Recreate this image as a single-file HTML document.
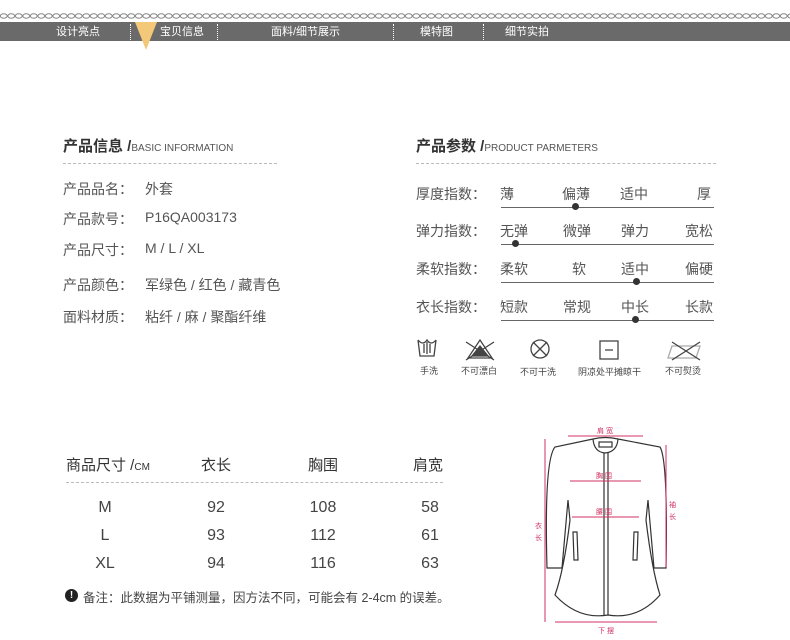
<!DOCTYPE html>
<html><head><meta charset="utf-8"><style>
body{margin:0;width:790px;height:640px;background:#fff;position:relative;overflow:hidden;font-family:"Liberation Sans","Noto Sans CJK SC",sans-serif;color:#555}
.a{position:absolute;white-space:nowrap}
.nav{font-size:11px;color:#fff;top:24px;line-height:16px}
.sep{position:absolute;top:24px;height:16px;border-left:1px dotted #fff}
.t{font-size:15px;font-weight:bold;color:#333}
.t span{font-size:10px;font-weight:normal;color:#555}
.dash{position:absolute;border-top:1px dashed #bbb;height:0}
.l{font-size:14px;color:#555}
.o{font-size:14px;color:#555}
.ln{position:absolute;height:1px;background:#666}
.dot{position:absolute;width:7px;height:7px;border-radius:50%;background:#333}
.ic{font-size:9px;color:#444}
.tb{font-size:16px;color:#444;text-align:center;width:60px}
.th{font-size:15px;color:#333;text-align:center;width:60px}
</style></head><body>
<svg class="a" style="left:0;top:12px" width="790" height="8"><defs><pattern id="c" width="7.5" height="8" patternUnits="userSpaceOnUse"><ellipse cx="3.75" cy="4" rx="3.4" ry="2.2" fill="none" stroke="#888" stroke-width="1"/></pattern></defs><rect width="790" height="8" fill="url(#c)"/></svg>
<div class="a" style="left:0;top:22px;width:790px;height:19px;background:#6a6a6a"></div>
<div class="a nav" style="left:56px">设计亮点</div>
<div class="sep" style="left:130px"></div>
<div class="a nav" style="left:160px">宝贝信息</div>
<div class="sep" style="left:217px"></div>
<div class="a nav" style="left:271px">面料/细节展示</div>
<div class="sep" style="left:393px"></div>
<div class="a nav" style="left:420px">模特图</div>
<div class="sep" style="left:483px"></div>
<div class="a nav" style="left:505px">细节实拍</div>
<svg class="a" style="left:135px;top:22px" width="23" height="29"><polygon points="0,0 22,0 11,28" fill="#f3c878"/></svg>

<div class="a t" style="left:63px;top:135px">产品信息 /<span>BASIC INFORMATION</span></div>
<div class="dash" style="left:63px;top:163px;width:214px"></div>
<div class="a l" style="left:63px;top:179px">产品品名：</div><div class="a l" style="left:145px;top:179px">外套</div>
<div class="a l" style="left:63px;top:209px">产品款号：</div><div class="a l" style="left:145px;top:209px">P16QA003173</div>
<div class="a l" style="left:63px;top:240px">产品尺寸：</div><div class="a l" style="left:145px;top:240px">M / L / XL</div>
<div class="a l" style="left:63px;top:275px">产品颜色：</div><div class="a l" style="left:145px;top:275px">军绿色 / 红色 / 藏青色</div>
<div class="a l" style="left:63px;top:307px">面料材质：</div><div class="a l" style="left:145px;top:307px">粘纤 / 麻 / 聚酯纤维</div>

<div class="a t" style="left:416px;top:135px">产品参数 /<span>PRODUCT PARMETERS</span></div>
<div class="dash" style="left:416px;top:163px;width:300px"></div>

<div class="a l" style="left:416px;top:184px">厚度指数：</div>
<div class="a o" style="left:500px;top:184px">薄</div><div class="a o" style="left:562px;top:184px">偏薄</div><div class="a o" style="left:620px;top:184px">适中</div><div class="a o" style="left:697px;top:184px">厚</div>
<div class="ln" style="left:501px;top:207px;width:213px"></div><div class="dot" style="left:572px;top:203px"></div>

<div class="a l" style="left:416px;top:221px">弹力指数：</div>
<div class="a o" style="left:500px;top:221px">无弹</div><div class="a o" style="left:563px;top:221px">微弹</div><div class="a o" style="left:621px;top:221px">弹力</div><div class="a o" style="left:685px;top:221px">宽松</div>
<div class="ln" style="left:501px;top:244px;width:213px"></div><div class="dot" style="left:512px;top:240px"></div>

<div class="a l" style="left:416px;top:259px">柔软指数：</div>
<div class="a o" style="left:500px;top:259px">柔软</div><div class="a o" style="left:572px;top:259px">软</div><div class="a o" style="left:621px;top:259px">适中</div><div class="a o" style="left:685px;top:259px">偏硬</div>
<div class="ln" style="left:501px;top:282px;width:213px"></div><div class="dot" style="left:633px;top:278px"></div>

<div class="a l" style="left:416px;top:297px">衣长指数：</div>
<div class="a o" style="left:500px;top:297px">短款</div><div class="a o" style="left:563px;top:297px">常规</div><div class="a o" style="left:621px;top:297px">中长</div><div class="a o" style="left:685px;top:297px">长款</div>
<div class="ln" style="left:501px;top:320px;width:213px"></div><div class="dot" style="left:632px;top:316px"></div>

<svg class="a" style="left:410px;top:336px" width="310" height="28" fill="none" stroke="#444" stroke-width="1.3">
<path d="M8 4 L10 20 H24 L26 4 M8 4 Q13 10 17 4 Q21 10 26 4 M17 6 V18 M14 8 V17 M20 8 V17"/>
<path d="M58 22 L70 4 L82 22 Z M56 6 L84 24 M56 24 L84 6" /><path d="M62 20 L70 10 L78 20Z" fill="#444"/>
<circle cx="130" cy="13" r="9"/><path d="M123 6 L137 20 M137 6 L123 20"/>
<rect x="190" y="5" width="18" height="18"/><path d="M195 14 H203"/>
<path d="M262 10 H290 L286 22 H258 Z" stroke="#aaa"/><path d="M262 6 L290 24 M262 24 L290 6"/>
</svg>
<div class="a ic" style="left:420px;top:364px">手洗</div>
<div class="a ic" style="left:461px;top:364px">不可漂白</div>
<div class="a ic" style="left:520px;top:365px">不可干洗</div>
<div class="a ic" style="left:578px;top:365px">阴凉处平摊晾干</div>
<div class="a ic" style="left:665px;top:364px">不可熨烫</div>

<div class="a" style="left:66px;top:454px;font-size:15px;color:#333">商品尺寸 /<span style="font-size:10px">CM</span></div>
<div class="a th" style="left:186px;top:454px">衣长</div>
<div class="a th" style="left:293px;top:454px">胸围</div>
<div class="a th" style="left:398px;top:454px">肩宽</div>
<div class="dash" style="left:66px;top:482px;width:377px"></div>
<div class="a tb" style="left:75px;top:499px">M</div><div class="a tb" style="left:186px;top:499px">92</div><div class="a tb" style="left:293px;top:499px">108</div><div class="a tb" style="left:400px;top:499px">58</div>
<div class="a tb" style="left:75px;top:527px">L</div><div class="a tb" style="left:186px;top:527px">93</div><div class="a tb" style="left:293px;top:527px">112</div><div class="a tb" style="left:400px;top:527px">61</div>
<div class="a tb" style="left:75px;top:555px">XL</div><div class="a tb" style="left:186px;top:555px">94</div><div class="a tb" style="left:293px;top:555px">116</div><div class="a tb" style="left:400px;top:555px">63</div>
<div class="a" style="left:65px;top:589px;width:13px;height:13px;border-radius:50%;background:#222;color:#fff;font-size:10px;font-weight:bold;text-align:center;line-height:13px">!</div>
<div class="a" style="left:83px;top:587px;font-size:12.5px;color:#444">备注：此数据为平铺测量，因方法不同，可能会有 2-4cm 的误差。</div>

<svg class="a" style="left:520px;top:420px" width="170" height="220" fill="none">
<g stroke="#333" stroke-width="1.2">
<path d="M73 19 Q85 16 98 19 L140 27 Q148 40 146 148 L134 148 L128 80 L126 100 Q132 150 140 175 Q118 200 88 195 Q58 200 35 175 Q44 150 50 100 L48 80 L42 148 L27 148 Q24 40 35 27 Z"/>
<path d="M73 19 Q74 32 85 33 Q97 32 98 19"/>
<rect x="79" y="22" width="13" height="5"/>
<path d="M84 33 V195 M88 33 V195"/>
<path d="M53 112 L57 112 L58 140 L54 140 Z M114 112 L118 112 L117 140 L113 140 Z"/>
</g>
<g stroke="#d03060" stroke-width="1">
<path d="M48 16 H123 M25 19 V202 M146 25 V147 M35 202 H137 M50 61 H121 M52 97 H119"/>
</g>
<g fill="#d03060" font-size="7">
<text x="77" y="13">肩 宽</text><text x="76" y="58">胸 围</text><text x="76" y="94">腰 围</text>
<text x="15" y="108">衣</text><text x="15" y="120">长</text><text x="149" y="87">袖</text><text x="149" y="99">长</text>
<text x="78" y="213">下 摆</text></g>
</svg>
</body></html>
